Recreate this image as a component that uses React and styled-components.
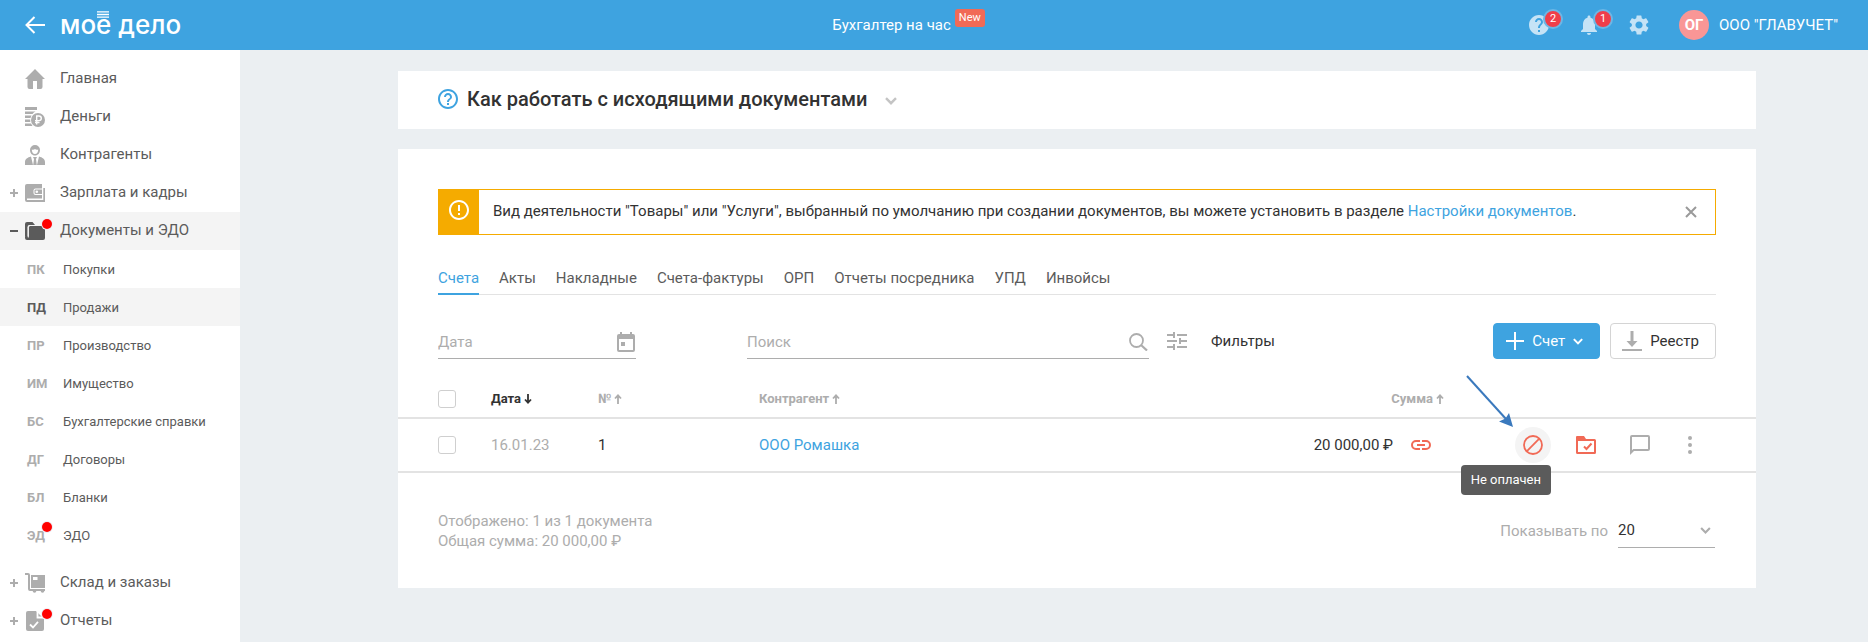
import React from 'react';
import styled, { createGlobalStyle, css } from 'styled-components';
import { MdErrorOutline, MdHelp, MdHelpOutline, MdNotifications, MdSettings } from 'react-icons/md';

const blue = '#3ea3e0';
const coral = '#f16a56';
const grey = '#adadad';
const dark = '#5b5b5b';
const ink = '#323232';

const GlobalStyle = createGlobalStyle`
  * {
    box-sizing: border-box;
  }
  body {
    margin: 0;
    background-color: #ebeff2;
    color: ${ink};
    font: 15px/20px Roboto, 'Liberation Sans', sans-serif;
  }
  a {
    color: ${blue};
    text-decoration: none;
  }
  button, input, select {
    font: inherit;
    color: inherit;
    margin: 0;
  }
  button {
    padding: 0;
    border: 0;
    background: none;
    cursor: pointer;
  }
  svg {
    display: block;
    flex: none;
  }
`

const Page = styled.div`
  display: flex;
  flex-direction: column;
  height: 100vh;
  overflow: hidden;
`

const Header = styled.header`
  display: flex;
  flex: none;
  align-items: center;
  height: 50px;
  padding-right: 30px;
  background-color: ${blue};
  color: white;
  a {
    color: white;
  }
`

const Brand = styled.div`
  display: flex;
  align-items: center;
  gap: 15px;
  width: 290px;
  padding-left: 25px;
`

const Logo = styled.a`
  position: relative;
  font: 500 26px/30px Inter, sans-serif;
  svg {
    position: absolute;
    top: 1px;
    left: 37px;
  }
`

const Promo = styled.div`
  display: flex;
  flex: 1;
  justify-content: center;
  gap: 4px;
`

const NewBadge = styled.span`
  height: 18px;
  margin-top: -6px;
  padding: 0 4px;
  border-radius: 3px;
  background-color: ${coral};
  font-size: 11px;
  line-height: 17px;
`

const Tools = styled.div`
  display: flex;
  align-items: center;
  gap: 26px;
`

const Tool = styled.button`
  position: relative;
  color: #c5e3f6;
`

const Count = styled.span`
  position: absolute;
  top: -4px;
  right: -12px;
  width: 20px;
  height: 20px;
  border: 2px solid #6cb7e6;
  border-radius: 50%;
  background-color: #ef3e4a;
  color: white;
  font-size: 11px;
  line-height: 16px;
`

const Account = styled.a`
  display: flex;
  align-items: center;
  gap: 10px;
  margin-left: 2px;
`

const Avatar = styled.span`
  width: 30px;
  border-radius: 50%;
  background-color: #f99696;
  font-weight: 700;
  line-height: 30px;
  text-align: center;
`

const Body = styled.div`
  display: flex;
  flex: 1;
  min-height: 0;
`

const Sidebar = styled.nav`
  flex: none;
  width: 240px;
  padding-top: 10px;
  background-color: white;
  overflow: hidden;
`

const activeItem = css`
  background-color: #f4f4f4;
`

const MenuItem = styled.a`
  display: grid;
  grid-template-columns: 10px 20px 1fr;
  align-items: center;
  height: 38px;
  padding-left: 10px;
  column-gap: 5px;
  color: ${dark};
  ${props => props.$active && activeItem}
`

const MenuLabel = styled.span`
  padding-left: 10px;
  line-height: 18px;
  padding-bottom: 2px;
`

const MenuIcon = styled.span`
  position: relative;
  color: ${props => props.$active ? dark : grey};
`

const Dot = styled.span`
  position: absolute;
  top: -2px;
  right: -7px;
  width: 10px;
  height: 10px;
  border-radius: 50%;
  background-color: #ff0000;
  box-shadow: 0 0 0 1px #eeeef4;
`

const SubMenu = styled.div`
  padding-bottom: 10px;
`

const SubItem = styled.a`
  display: grid;
  grid-template-columns: 18px 1fr;
  column-gap: 18px;
  align-items: center;
  height: 38px;
  padding: 2px 0 0 27px;
  color: ${dark};
  font-size: 13px;
  ${props => props.$active && activeItem}
`

const Code = styled.b`
  position: relative;
  color: ${props => props.$active ? dark : grey};
  white-space: nowrap;
  ${Dot} {
    top: -4px;
  }
`

const Main = styled.main`
  flex: 1;
  min-width: 0;
  padding: 21px 112px 0 158px;
`

const HelpCard = styled.section`
  display: flex;
  align-items: center;
  gap: 7px;
  height: 58px;
  padding: 0 38px 2px;
  margin-bottom: 20px;
  background-color: white;
  color: ${blue};
`

const HelpTitle = styled.h1`
  margin: 0;
  color: ${ink};
  font-size: 20px;
  font-weight: 500;
  line-height: 24px;
`

const HelpToggle = styled.button`
  padding: 4px 10px 0;
  color: #c4c4c4;
`

const Card = styled.section`
  padding: 40px 0 37px;
  background-color: white;
`

const Alert = styled.div`
  display: flex;
  align-items: center;
  height: 46px;
  margin: 0 40px;
  border: 1px solid #f5ab00;
`

const AlertIcon = styled.span`
  display: flex;
  justify-content: center;
  align-self: stretch;
  width: 40px;
  padding-top: 8px;
  background-color: #f5ab00;
  color: white;
`

const AlertText = styled.p`
  flex: 1;
  margin: 0;
  padding: 0 14px 2px;
`

const AlertClose = styled.button`
  padding: 0 18px;
  color: #9a9a9a;
`

const Tabs = styled.nav`
  display: flex;
  gap: 20px;
  margin: 33px 40px 28px;
  border-bottom: 1px solid #e3e3e3;
`

const Tab = styled.a`
  margin-bottom: -1px;
  padding-bottom: 5px;
  border-bottom: 2px solid ${props => props.$active ? blue : 'transparent'};
  color: ${props => props.$active ? blue : dark};
`

const Toolbar = styled.div`
  display: flex;
  align-items: center;
  height: 36px;
  margin: 0 40px;
`

const Field = styled.label`
  display: flex;
  align-items: center;
  width: ${props => props.$width};
  height: 36px;
  margin-right: ${props => props.$after};
  padding: 2px 1px 0 0;
  border-bottom: 1px solid ${grey};
  color: ${grey};
  input {
    flex: 1;
    min-width: 0;
    padding: 0;
    border: 0;
    outline: 0;
    background: none;
    color: ${ink};
  }
  input::placeholder {
    color: ${grey};
    opacity: 1;
  }
`

const FilterButton = styled.button`
  display: flex;
  align-items: center;
  gap: 24px;
  margin-right: auto;
  svg {
    color: ${grey};
  }
`

const Button = styled.button`
  display: flex;
  align-items: center;
  justify-content: center;
  gap: 8px;
  height: 36px;
  margin-left: 10px;
  padding: 0 ${props => props.$primary ? '16px 0 12px' : '16px 0 11px'};
  border: 1px solid ${props => props.$primary ? blue : '#d4d4d4'};
  border-radius: 4px;
  background-color: ${props => props.$primary ? blue : 'white'};
  color: ${props => props.$primary ? 'white' : ink};
`

const Table = styled.table`
  width: 100%;
  margin-top: 19px;
  border-collapse: collapse;
  table-layout: fixed;
  th, td {
    padding: 0;
    border-bottom: 2px solid #e3e3e3;
    text-align: left;
  }
  th {
    height: 40px;
    padding-top: 2px;
    color: ${grey};
    font-size: 13px;
    font-weight: 700;
  }
  td {
    height: 54px;
  }
`

const Col = styled.col`
  width: ${props => props.$width};
`

const CheckCell = styled.td`
  && {
    padding-left: 40px;
  }
`

const Checkbox = styled.input.attrs({ type: 'checkbox' })`
  display: block;
  appearance: none;
  width: 18px;
  height: 18px;
  margin: 0;
  border: 1px solid #cfcfcf;
  border-radius: 3px;
  background-color: white;
`

const Sort = styled.button`
  display: inline-flex;
  align-items: center;
  gap: 3px;
  color: ${props => props.$active ? ink : grey};
`

const SumHead = styled.th`
  && {
    text-align: right;
  }
`

const DateText = styled.span`
  color: ${grey};
`

const Sum = styled.div`
  display: flex;
  align-items: center;
  justify-content: flex-end;
  gap: 18px;
  padding-right: 13px;
  white-space: nowrap;
`

const Actions = styled.div`
  display: flex;
  align-items: center;
  justify-content: flex-end;
  padding-right: 48px;
`

const Action = styled.button`
  position: relative;
  display: flex;
  align-items: center;
  justify-content: center;
  width: 36px;
  height: 36px;
  margin-left: ${props => props.$gap || '18px'};
  border-radius: 50%;
  background-color: ${props => props.$hover ? '#f4f4f4' : 'transparent'};
  color: ${props => props.$alert ? coral : grey};
`

const Tooltip = styled.span`
  position: absolute;
  top: 38px;
  right: 0;
  z-index: 1;
  padding: 5px 10px;
  border-radius: 4px;
  background-color: #5b5b5b;
  color: white;
  font-size: 13px;
  white-space: nowrap;
`

const Pointer = styled.svg`
  position: absolute;
  right: 37px;
  bottom: 35px;
`

const Footer = styled.footer`
  display: flex;
  align-items: flex-start;
  justify-content: space-between;
  padding: 38px 41px 0 40px;
  color: ${grey};
`

const Totals = styled.p`
  margin: 0;
`

const PageSize = styled.label`
  display: flex;
  align-items: center;
  gap: 10px;
  padding-top: 2px;
`

const SelectBox = styled.span`
  display: flex;
  align-items: center;
  width: 97px;
  height: 35px;
  border-bottom: 1px solid ${grey};
  select {
    flex: 1;
    appearance: none;
    border: 0;
    background: none;
    color: ${ink};
    outline: 0;
  }
  svg {
    margin-right: 4px;
  }
`

const Icon = ({ w = 20, h = 20, children }) => (
  <svg width={w} height={h} viewBox={`0 0 ${w} ${h}`} fill="currentColor" aria-hidden="true">{children}</svg>
)

const Chevron = ({ w = 12, h = 8 }) => (
  <svg width={w} height={h} viewBox="0 0 12 8" fill="none" stroke="currentColor" strokeWidth="2.4" aria-hidden="true">
    <path d="M1 1.2 6 6.2 11 1.2" />
  </svg>
)

const SortArrow = ({ down }) => (
  <svg width="8" height="10" viewBox="0 0 8 10" fill="none" stroke="currentColor" strokeWidth="1.8" aria-hidden="true">
    <path d={down ? 'M4 0V9M1 5.5 4 8.7 7 5.5' : 'M4 10V1M1 4.5 4 1.3 7 4.5'} />
  </svg>
)

const HomeIcon = () => (
  <Icon><path d="M10 0 20 10H17.5V18a2 2 0 0 1-2 2H12V12H8V20H4.5a2 2 0 0 1-2-2V10H0Z" /></Icon>
)

const MoneyIcon = () => (
  <Icon>
    <path d="M0 0H12V3H0ZM0 4.500H10.500A8 8 0 0 0 7.500 7H0ZM0 8.500H6.500L5.500 11H0ZM0 12.500H5.200L5.300 15H0ZM0 16.500H6L7.500 19H0Z" />
    <circle cx="13" cy="13" r="7" />
    <path d="M11.7 17.5V9H14a2.300 2.300 0 0 1 0 4.600H10M10 15.500H14.500" fill="none" stroke="white" strokeWidth="1.400" />
  </Icon>
)

const PeopleIcon = () => (
  <Icon>
    <path fillRule="evenodd" d="M10 0a5 5 0 0 1 5 5c0 3-2 5.500-5 5.500S5 8 5 5a5 5 0 0 1 5-5ZM6.800 4.500C6.800 7 8 9 10 9s3.200-2 3.200-4.500c-1.500.6-2.500 0-3.200-.5-.7.5-1.700 1.100-3.200.5Z" />
    <path d="M0 20V17c0-3 2.500-4.500 6-5.500L8 20ZM20 20V17c0-3-2.500-4.500-6-5.500L12 20ZM8 12h4l-1 2 .8 6H8.200L9 14Z" />
  </Icon>
)

const WalletIcon = () => (
  <Icon>
    <path d="M2 1H17V15.500H2V17H18.300V5H20V19H2a2 2 0 0 1-2-2V3a2 2 0 0 1 2-2Z" />
    <path d="M17.500 5.500H10.500a2 2 0 0 0-2 2V10a2 2 0 0 0 2 2H17.500Z" fill="white" />
    <path d="M17 6.500H10.500a1 1 0 0 0-1 1V10a1 1 0 0 0 1 1H17Z" />
    <circle cx="11.8" cy="8.700" r="1.300" fill="white" />
  </Icon>
)

const FolderIcon = () => (
  <Icon>
    <path d="M0 3a2 2 0 0 1 2-2H7.500L10 4H4.500a2 2 0 0 0-2 2V17H2a2 2 0 0 1-2-2Z" />
    <path d="M5 5H18a2 2 0 0 1 2 2V17a2 2 0 0 1-2 2H2a2 2 0 0 1-2-2V15.500H3.800V6.500Q3.800 5 5 5Z" />
    <path d="M3.300 16.500V6.200Q3.300 4.500 5 4.500H9" fill="none" stroke="#f4f4f4" />
  </Icon>
)

const CartIcon = () => (
  <Icon>
    <path d="M0 0H3a2 2 0 0 1 2 2V16H20V18H5a2 2 0 0 1-2-2V2H0Z" />
    <path fillRule="evenodd" d="M6 2H20V15H6ZM8 4V7H12.500V4Z" />
    <circle cx="9.500" cy="18" r="1.800" /><circle cx="17.500" cy="18" r="1.800" />
  </Icon>
)

const ReportIcon = () => (
  <Icon>
    <path d="M3 0H11L19 8V18a2 2 0 0 1-2 2H3a2 2 0 0 1-2-2V2a2 2 0 0 1 2-2Z" />
    <path d="M12.5 0V6.500H19M5 13.500 8 16.500 13 10.800" fill="none" stroke="white" strokeWidth="1.800" />
  </Icon>
)

const PlusMinus = ({ sign }) => (
  <svg width="8" height="8" viewBox="0 0 8 8" fill="none" stroke={sign === '-' ? dark : grey} strokeWidth="2" aria-hidden="true">
    <path d={sign === '-' ? 'M0 4H8' : 'M0 4H8M4 0V8'} />
  </svg>
)

const topMenu = [
  { label: 'Главная', icon: <HomeIcon /> },
  { label: 'Деньги', icon: <MoneyIcon /> },
  { label: 'Контрагенты', icon: <PeopleIcon /> },
  { label: 'Зарплата и кадры', icon: <WalletIcon />, sign: '+' },
  { label: 'Документы и ЭДО', icon: <FolderIcon />, sign: '-', dot: true, active: true },
]

const subMenu = [
  ['ПК', 'Покупки'],
  ['ПД', 'Продажи'],
  ['ПР', 'Производство'],
  ['ИМ', 'Имущество'],
  ['БС', 'Бухгалтерские справки'],
  ['ДГ', 'Договоры'],
  ['БЛ', 'Бланки'],
  ['ЭД', 'ЭДО'],
]

const bottomMenu = [
  { label: 'Склад и заказы', icon: <CartIcon />, sign: '+' },
  { label: 'Отчеты', icon: <ReportIcon />, sign: '+', dot: true },
]

const tabs = ['Счета', 'Акты', 'Накладные', 'Счета-фактуры', 'ОРП', 'Отчеты посредника', 'УПД', 'Инвойсы']

const MenuRow = ({ label, icon, sign, dot, active }) => (
  <MenuItem href="#" $active={active}>
    <span>{sign && <PlusMinus sign={sign} />}</span>
    <MenuIcon $active={active}>{icon}{dot && <Dot />}</MenuIcon>
    <MenuLabel>{label}</MenuLabel>
  </MenuItem>
)

const TopBar = () => (
  <Header>
    <Brand>
      <Tool aria-label="Назад">
        <svg width="20" height="18" viewBox="0 0 20 18" fill="none" stroke="white" strokeWidth="2">
          <path d="M20 9H1.5M9.5 1 1.5 9 9.5 17" />
        </svg>
      </Tool>
      <Logo href="#" aria-label="моё дело">
        мое дело
        <svg width="12" height="7" viewBox="0 0 12 7" stroke="white" strokeWidth="1.3">
          <path d="M0 .8H12M0 3.500H12M0 6.200H12" />
        </svg>
      </Logo>
    </Brand>
    <Promo>
      <a href="#">Бухгалтер на час</a>
      <NewBadge>New</NewBadge>
    </Promo>
    <Tools>
      <Tool aria-label="Помощь"><MdHelp size={24} /><Count>2</Count></Tool>
      <Tool aria-label="Уведомления"><MdNotifications size={24} /><Count>1</Count></Tool>
      <Tool aria-label="Настройки"><MdSettings size={24} /></Tool>
      <Account href="#"><Avatar>ОГ</Avatar>ООО "ГЛАВУЧЕТ"</Account>
    </Tools>
  </Header>
)

const Menu = () => (
  <Sidebar>
    {topMenu.map(item => <MenuRow key={item.label} {...item} />)}
    <SubMenu>
      {subMenu.map(([code, label]) => (
        <SubItem key={code} href="#" $active={code === 'ПД'}>
          <Code $active={code === 'ПД'}>{code}{code === 'ЭД' && <Dot />}</Code>
          <span>{label}</span>
        </SubItem>
      ))}
    </SubMenu>
    {bottomMenu.map(item => <MenuRow key={item.label} {...item} />)}
  </Sidebar>
)

const Filters = () => (
  <Toolbar>
    <Field $width="198px" $after="111px">
      <input placeholder="Дата" aria-label="Дата" />
      <Icon w={18}>
        <path fillRule="evenodd" d="M3 0H5V2H13V0H15V2H16a2 2 0 0 1 2 2V18a2 2 0 0 1-2 2H2a2 2 0 0 1-2-2V4A2 2 0 0 1 2 2H3ZM2 7V18H16V7Z" />
        <path d="M4 10H8V14H4Z" />
      </Icon>
    </Field>
    <Field $width="402px" $after="18px">
      <input placeholder="Поиск" aria-label="Поиск" />
      <svg width="19" height="18" viewBox="0 0 19 18" fill="none" stroke="currentColor" strokeWidth="1.8">
        <circle cx="7.5" cy="7.5" r="6.5" /><path d="M12 12 18 17.5" strokeWidth="2.2" />
      </svg>
    </Field>
    <FilterButton>
      <svg width="20" height="18" viewBox="0 0 20 18" fill="none" stroke="currentColor" strokeWidth="2">
        <path d="M0 3H8M7 0V6M10 3H20M0 9H10M13 9H20M13 6V12M0 15H8M7 12V18M10 15H20" />
      </svg>
      Фильтры
    </FilterButton>
    <Button $primary>
      <svg width="18" height="18" viewBox="0 0 18 18" stroke="white" strokeWidth="2"><path d="M9 0V18M0 9H18" /></svg>
      Счет
      <Chevron w={10} h={7} />
    </Button>
    <Button>
      <svg width="20" height="20" viewBox="0 0 20 20" fill={grey}>
        <path d="M8.5 0H11.5V10H15.5L10 16 4.5 10H8.5ZM0 18H20V20H0Z" />
      </svg>
      Реестр
    </Button>
  </Toolbar>
)

const Documents = () => (
  <Table>
    <colgroup>
      <Col $width="93px" />
      <Col $width="107px" />
      <Col $width="161px" />
      <Col />
      <Col $width="200px" />
      <Col $width="312px" />
    </colgroup>
    <thead>
      <tr>
        <CheckCell as="th"><Checkbox aria-label="Выбрать все" /></CheckCell>
        <th><Sort $active>Дата<SortArrow down /></Sort></th>
        <th><Sort>№<SortArrow /></Sort></th>
        <th><Sort>Контрагент<SortArrow /></Sort></th>
        <SumHead><Sort>Сумма<SortArrow /></Sort></SumHead>
        <th />
      </tr>
    </thead>
    <tbody>
      <tr>
        <CheckCell><Checkbox aria-label="Выбрать счет 1" /></CheckCell>
        <td><DateText>16.01.23</DateText></td>
        <td>1</td>
        <td><a href="#">ООО Ромашка</a></td>
        <td>
          <Sum>
            20 000,00 ₽
            <svg width="20" height="10" viewBox="0 0 20 10" fill="none" stroke={coral} strokeWidth="2">
              <path d="M9 1H5a4 4 0 0 0 0 8H9M11 1H15a4 4 0 0 1 0 8H11M6 5H14" />
            </svg>
          </Sum>
        </td>
        <td>
          <Actions>
            <Action $alert $hover aria-label="Статус оплаты">
              <svg width="20" height="20" viewBox="0 0 20 20" fill="none" stroke="currentColor" strokeWidth="1.8">
                <circle cx="10" cy="10" r="9" /><path d="M3.7 16.3 16.3 3.7" />
              </svg>
              <Tooltip role="tooltip">Не оплачен</Tooltip>
              <Pointer width="48" height="53" viewBox="0 0 48 53">
                <path d="M1 1 40 44" stroke="#3a79bd" strokeWidth="2" />
                <path d="M47 52 33 46.5 39.5 43.5 43 38Z" fill="#3a79bd" />
              </Pointer>
            </Action>
            <Action $alert $gap="17px" aria-label="Подписан">
              <Icon h={18}>
                <path fillRule="evenodd" d="M1 0H8L10 3H18.5A1.5 1.5 0 0 1 20 4.5V16.5A1.5 1.5 0 0 1 18.5 18H1.5A1.5 1.5 0 0 1 0 16.5V1A1 1 0 0 1 1 0ZM2 5V16H18V5Z" />
                <path d="M8 10.5 10.5 13 15.5 7.5" fill="none" stroke="currentColor" strokeWidth="2" />
              </Icon>
            </Action>
            <Action aria-label="Комментарий">
              <Icon><path fillRule="evenodd" d="M2 0H18a2 2 0 0 1 2 2V14a2 2 0 0 1-2 2H4L0 20V2A2 2 0 0 1 2 0ZM2 2V15.2L3.2 14H18V2Z" /></Icon>
            </Action>
            <Action $gap="14px" aria-label="Еще">
              <Icon w={4} h={18}><circle cx="2" cy="2" r="2" /><circle cx="2" cy="9" r="2" /><circle cx="2" cy="16" r="2" /></Icon>
            </Action>
          </Actions>
        </td>
      </tr>
    </tbody>
  </Table>
)

const App = () => (
  <Page>
    <GlobalStyle />
    <TopBar />
    <Body>
      <Menu />
      <Main>
        <HelpCard>
          <MdHelpOutline size={24} />
          <HelpTitle>Как работать с исходящими документами</HelpTitle>
          <HelpToggle aria-label="Развернуть"><Chevron /></HelpToggle>
        </HelpCard>
        <Card>
          <Alert>
            <AlertIcon><MdErrorOutline size={24} /></AlertIcon>
            <AlertText>
              Вид деятельности "Товары" или "Услуги", выбранный по умолчанию при создании документов, вы можете установить в разделе <a href="#">Настройки документов</a>.
            </AlertText>
            <AlertClose aria-label="Закрыть">
              <svg width="12" height="12" viewBox="0 0 12 12" stroke="currentColor" strokeWidth="2"><path d="M1 1 11 11M11 1 1 11" /></svg>
            </AlertClose>
          </Alert>
          <Tabs>
            {tabs.map((tab, i) => <Tab key={tab} href="#" $active={i === 0}>{tab}</Tab>)}
          </Tabs>
          <Filters />
          <Documents />
          <Footer>
            <Totals>
              Отображено: 1 из 1 документа<br />
              Общая сумма: 20 000,00 ₽
            </Totals>
            <PageSize>
              Показывать по
              <SelectBox>
                <select defaultValue="20"><option>20</option><option>50</option><option>100</option></select>
                <Chevron w={11} h={7} />
              </SelectBox>
            </PageSize>
          </Footer>
        </Card>
      </Main>
    </Body>
  </Page>
)

export default App;
